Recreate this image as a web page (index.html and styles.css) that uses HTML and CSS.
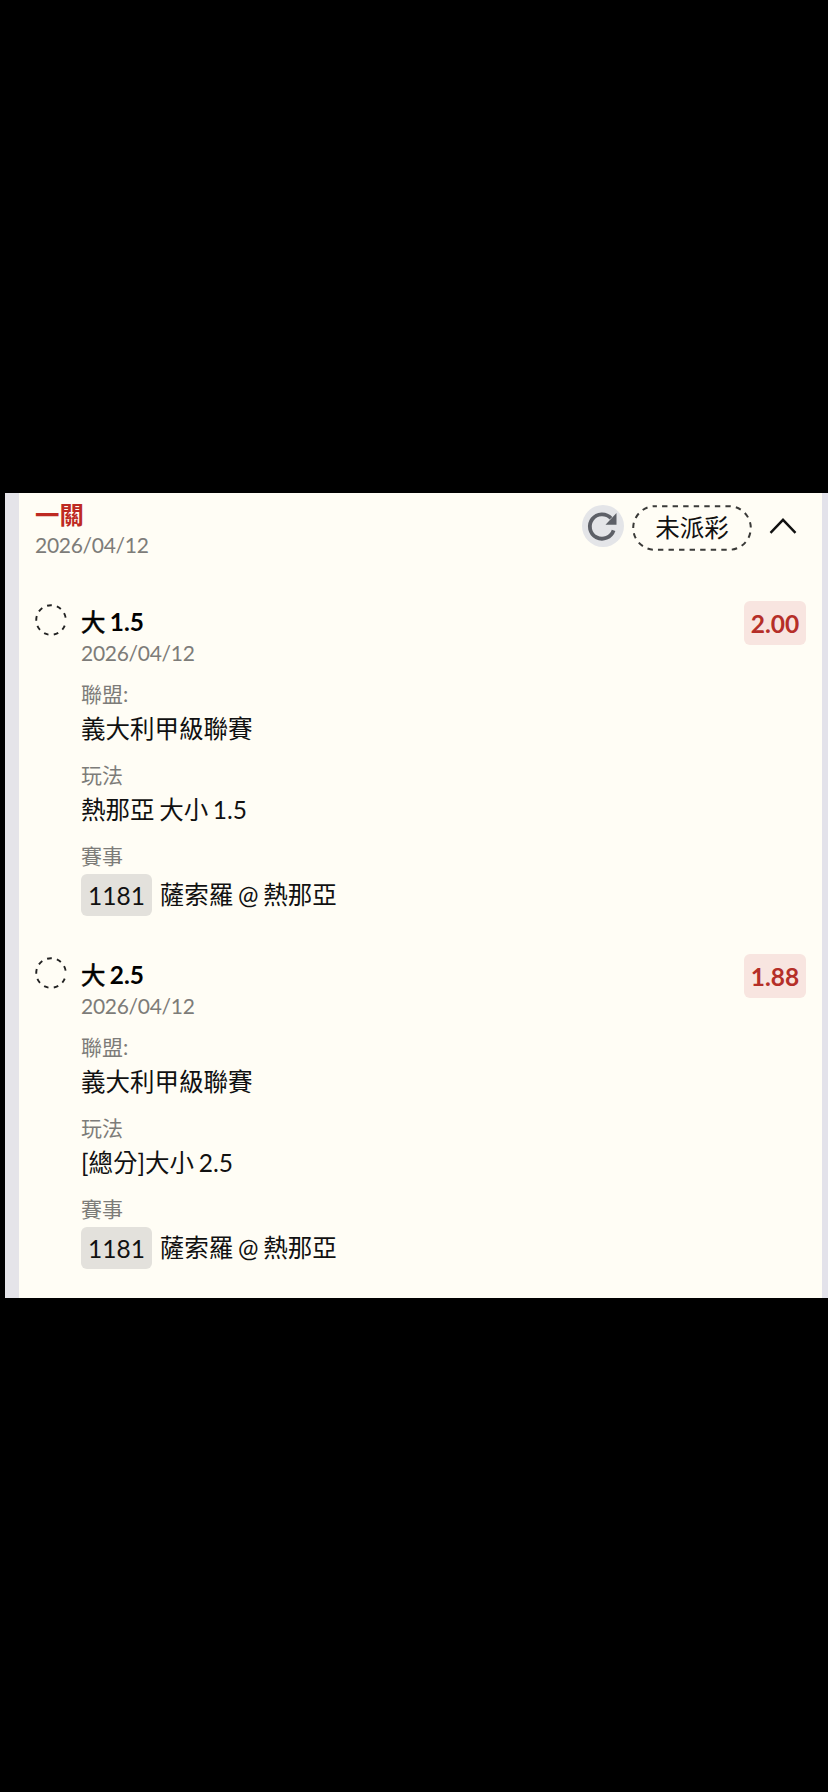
FILE: index.html
```html
<!DOCTYPE html>
<html lang="zh-Hant">
<head>
<meta charset="utf-8">
<title>一關</title>
<link rel="stylesheet" href="styles.css">
</head>
<body>
<main class="panel">
  <header class="head">
    <div class="head-text">
      <h1 class="parlay">一關</h1>
      <p class="date">2026/04/12</p>
    </div>
    <svg class="refresh" viewBox="0 0 42 42"><circle cx="21" cy="21" r="21" fill="#e4e5e8"/><path d="M31.6 25.4A12.2 12.2 0 1 1 29 13.2" fill="none" stroke="#5d6067" stroke-width="3.8"/><path d="M34.5 8V19.8H23.5z" fill="#5d6067"/></svg>
    <div class="status"><svg class="outline" viewBox="0 0 120 46"><rect x="1.2" y="1.2" width="117.6" height="43.6" rx="21.8" fill="none" stroke="#3a3a38" stroke-width="2" stroke-dasharray="5.4 5.16" stroke-dashoffset="3.5"/></svg><span>未派彩</span></div>
    <svg class="chevron" viewBox="0 0 28 18"><path d="M1.5 15.8 14 2.8 26.5 15.8" fill="none" stroke="#111" stroke-width="2.4"/></svg>
  </header>

  <section class="bet">
    <svg class="ring" viewBox="0 0 32 32"><circle class="ring-line" cx="16" cy="16" r="14.8" transform="rotate(22 16 16)"/></svg>
    <div class="info">
      <h2 class="pick"><span class="side">大</span> 1.5</h2>
      <p class="date">2026/04/12</p>
      <dl class="fields">
        <dt>聯盟:</dt><dd>義大利甲級聯賽</dd>
        <dt>玩法</dt><dd>熱那亞 大小 1.5</dd>
        <dt>賽事</dt><dd class="match"><span class="code">1181</span>薩索羅 @ 熱那亞</dd>
      </dl>
    </div>
    <span class="odds">2.00</span>
  </section>

  <section class="bet">
    <svg class="ring" viewBox="0 0 32 32"><circle class="ring-line" cx="16" cy="16" r="14.8" transform="rotate(22 16 16)"/></svg>
    <div class="info">
      <h2 class="pick"><span class="side">大</span> 2.5</h2>
      <p class="date">2026/04/12</p>
      <dl class="fields">
        <dt>聯盟:</dt><dd>義大利甲級聯賽</dd>
        <dt>玩法</dt><dd>[總分]大小 2.5</dd>
        <dt>賽事</dt><dd class="match"><span class="code">1181</span>薩索羅 @ 熱那亞</dd>
      </dl>
    </div>
    <span class="odds">1.88</span>
  </section>
</main>
</body>
</html>
```
FILE: styles.css
```css
* { box-sizing: border-box; margin: 0; padding: 0; }
body {
  height: 1792px;
  padding: 493px 0 0 5px;
  background: #000;
  color: #111;
  font: 24.5px/30px Lato, "Noto Sans CJK TC", sans-serif;
  word-spacing: -1.6px;
}
.panel {
  height: 805px;
  padding: 7px 16px 0 16px;
  border-left: 14px solid #e5e4e9;
  border-right: 6px solid #e3e2ea;
  background: #fffdf5;
}
.head { display: flex; height: 101px; }
.head-text { flex: 1; }
.parlay { font-size: 24.4px; line-height: 29px; font-weight: 700; color: #be2a22; }
.date { font-size: 21px; line-height: 31px; letter-spacing: -0.28px; color: #7d7c79; }
.refresh { width: 42px; height: 42px; margin: 5px 8.5px 0 0; }
.status {
  position: relative;
  width: 120px;
  height: 46px;
  margin-top: 4.5px;
  text-align: center;
  line-height: 46px;
}
.outline { position: absolute; inset: 0; width: 120px; height: 46px; }
.chevron { width: 28px; height: 18px; margin: 17px 9px 0 17px; }
.bet { display: flex; align-items: flex-start; height: 353px; }
.ring { width: 32px; height: 32px; margin: 3px 14px 0 0; }
.ring-line {
  fill: none;
  stroke: #222;
  stroke-width: 1.9;
  stroke-dasharray: 4.7 5.25 4.7 5.25 4.7 5.25 4.7 5.25 4.7 5.25 4.7 5.25 4.7 5.25 4.7 5.25 4.7 20;
}
.info { flex: 1; padding-top: 5px; }
.pick { font-size: 24.4px; line-height: 31px; font-weight: 700; color: #000; }
.side { font-weight: 400; -webkit-text-stroke: 0.6px #000; }
.fields dt { margin-top: 11px; font-size: 21px; line-height: 30px; color: #7d7c79; }
.fields dd { line-height: 40px; }
.fields dd + dt { margin-top: 11px; }
.fields .match { display: flex; align-items: center; gap: 8px; margin-top: 2px; line-height: 43px; white-space: pre; }
.code {
  height: 42px;
  padding: 0 7px;
  border-radius: 6px;
  background: #e3e1dc;
  line-height: 43px;
}
.odds {
  width: 62px;
  height: 44px;
  border-radius: 6px;
  background: #f8e5e0;
  color: #b52f28;
  font-weight: 700;
  line-height: 45px;
  text-align: center;
}
```
